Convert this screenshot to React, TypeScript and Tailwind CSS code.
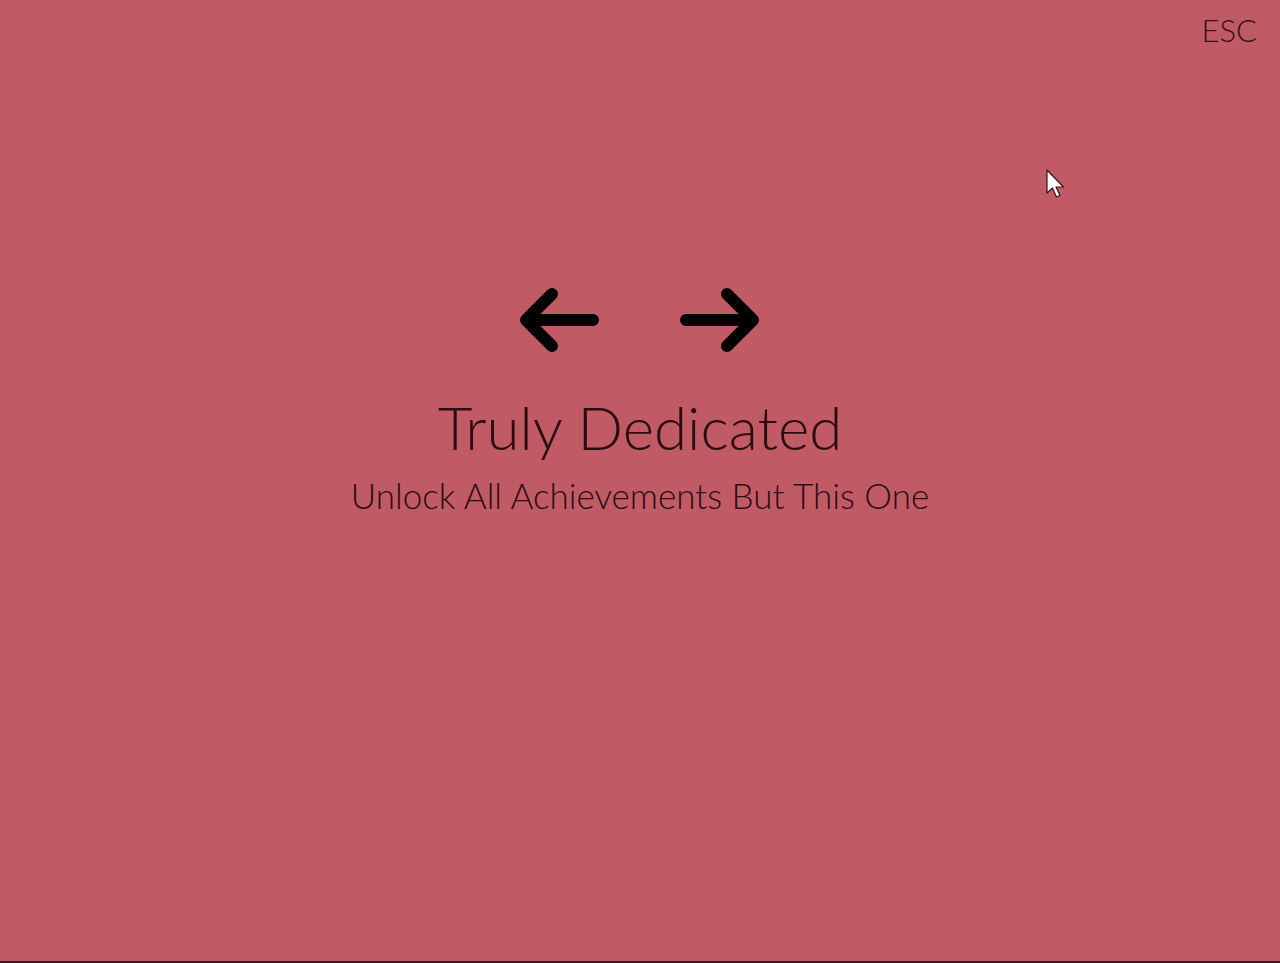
import React from 'react';

function Arrow({ dir }: { dir: 'left' | 'right' }) {
    const d =
        dir === 'left'
            ? 'M551 294 L525 320 L551 346 M525 320 L592 320'
            : 'M727 294 L753 320 L727 346 M753 320 L686 320';
    const vb = dir === 'left' ? '516 286 84 68' : '678 286 84 68';
    return (
        <svg width="84" height="68" viewBox={vb} fill="none">
            <path d={d} stroke="#000" strokeWidth="12" strokeLinecap="round" strokeLinejoin="round" />
        </svg>
    );
}

export default function App() {
    return (
        <div
            className="relative w-[1280px] h-[963px] bg-[#c05a65] overflow-hidden border-b-2 border-[#2a2420]"
            style={{ fontFamily: 'Lato, "Open Sans", sans-serif' }}
        >
            <div className="absolute top-[9px] right-[23px] text-[31px] font-light text-[#3a1016] leading-none pt-[6px]">
                ESC
            </div>

            {/* mouse pointer */}
            <svg className="absolute left-[1046px] top-[169px]" width="22" height="32" viewBox="0 0 22 32">
                <path d="M1 1 L1 24 L6.5 19 L10.5 28 L14 26.5 L10 18 L17.5 18 Z" fill="#fff" stroke="#3a1016" strokeWidth="1.2" strokeLinejoin="round" />
            </svg>

            <div className="flex flex-col items-center pt-[286px]">
                <div className="flex items-center gap-[77px] -translate-x-[1px]">
                    <Arrow dir="left" />
                    <Arrow dir="right" />
                </div>
                <h1 className="mt-[43px] text-[60px] font-light text-[#2a0c12] leading-none">Truly Dedicated</h1>
                <p className="mt-[21px] text-[35px] font-light text-[#2a0c12] leading-none">
                    Unlock All Achievements But This One
                </p>
            </div>
        </div>
    );
}
